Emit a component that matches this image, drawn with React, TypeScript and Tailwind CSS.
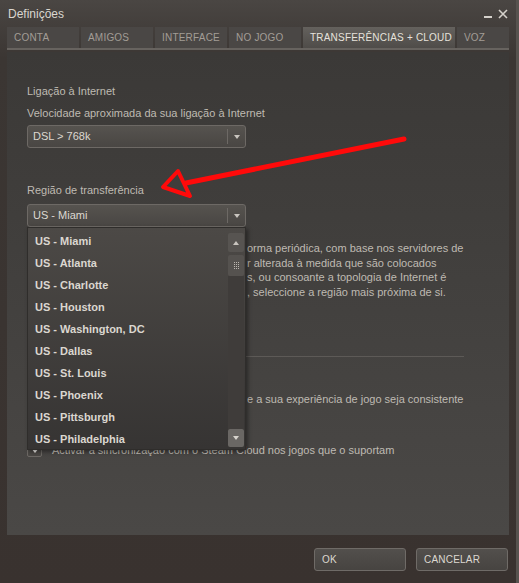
import React from 'react';

const tabs = [
  { label: 'CONTA', w: 'w-[72px]' },
  { label: 'AMIGOS', w: 'w-[72px]' },
  { label: 'INTERFACE', w: 'w-[72px]' },
  { label: 'NO JOGO', w: 'w-[72px]' },
  { label: 'TRANSFERÊNCIAS + CLOUD', w: 'w-[152px]', active: true },
  { label: 'VOZ', w: 'w-[52px]' },
];

const regions = [
  'US - Miami',
  'US - Atlanta',
  'US - Charlotte',
  'US - Houston',
  'US - Washington, DC',
  'US - Dallas',
  'US - St. Louis',
  'US - Phoenix',
  'US - Pittsburgh',
  'US - Philadelphia',
];

// fim das linhas do texto de ajuda; o início fica tapado pela lista aberta
const helpLines = [
  'orma periódica, com base nos servidores de',
  'r alterada à medida que são colocados',
  's, ou consoante a topologia de Internet é',
  ', seleccione a região mais próxima de si.',
];

function ArrowDown({ color = 'border-t-[#c9c5bf]' }: { color?: string }) {
  return (
    <span
      className={`block h-0 w-0 border-x-[3px] border-t-[4px] border-x-transparent ${color}`}
    />
  );
}

function Select({ value }: { value: string }) {
  return (
    <div className="flex h-[23px] w-[219px] items-center rounded-[3px] border border-[#6d6965] bg-gradient-to-b from-[#56534f] to-[#494643] text-[11px] text-[#dcd8d1]">
      <span className="flex-1 pl-[5px]">{value}</span>
      <span className="h-[15px] w-px bg-[#6d6965]" />
      <span className="flex w-[17px] justify-center">
        <ArrowDown />
      </span>
    </div>
  );
}

function RegionList() {
  return (
    <div className="absolute left-0 top-[23px] z-10 flex h-[223px] w-[219px] border border-[#2f2d2b] bg-gradient-to-b from-[#4c4946] to-[#363433] shadow-[2px_2px_4px_rgba(0,0,0,0.4)]">
      <ul className="flex-1 pt-[2px]">
        {regions.map((region) => (
          <li
            key={region}
            className="flex h-[22px] items-center pl-[7px] text-[11px] font-bold text-[#dbd7d0]"
          >
            {region}
          </li>
        ))}
      </ul>
      {/* scrollbar */}
      <div className="mr-px flex w-[16px] flex-col pb-[2px] pt-[5px]">
        <div className="flex h-[19px] items-center justify-center rounded-[2px] bg-[#575451]">
          <span className="block h-0 w-0 border-x-[3px] border-b-[4px] border-x-transparent border-b-[#c9c5bf]" />
        </div>
        <div className="mt-[3px] grid h-[21px] place-items-center rounded-[2px] bg-[#55524f]">
          <div className="grid grid-cols-3 gap-px">
            {Array.from({ length: 12 }).map((_, i) => (
              <span key={i} className="h-px w-px bg-[#bdb8b1]" />
            ))}
          </div>
        </div>
        <div className="flex-1 bg-[#3f3c3a]" />
        <div className="flex h-[18px] items-center justify-center rounded-[2px] bg-[#6a6764]">
          <ArrowDown color="border-t-[#d8d4ce]" />
        </div>
      </div>
    </div>
  );
}

export default function App() {
  return (
    <div className="relative flex h-[583px] w-[519px] overflow-hidden bg-[#2c2a28] font-['Liberation_Sans',Arial,sans-serif]">
      <div className="flex h-full w-[516px] flex-col bg-gradient-to-b from-[#4a4643] via-[#3b3633] via-[10%] to-[#39322f]">
        {/* barra de título */}
        <div className="flex h-[27px] shrink-0 items-center justify-between pl-[8px] pr-[8px]">
          <span className="text-[12px] text-[#dad6cf]">Definições</span>
          <div className="flex items-center gap-[6px] text-[#d5d1cb]">
            <span className="mt-[6px] block h-[2px] w-[8px] bg-[#d5d1cb]" />
            <svg width="10" height="10" viewBox="0 0 10 10">
              <path d="M1 1 L9 9 M9 1 L1 9" stroke="#d5d1cb" strokeWidth="1.6" />
            </svg>
          </div>
        </div>

        {/* separadores */}
        <div className="ml-[7px] flex h-[21px] shrink-0 gap-[2px]">
          {tabs.map((tab) => (
            <div
              key={tab.label}
              className={`flex items-center pl-[7px] text-[10px] tracking-[0.2px] ${tab.w} ${
                tab.active
                  ? 'bg-gradient-to-b from-[#64615d] to-[#4f4c49] text-[#e6e2dc]'
                  : 'bg-[#4a4745] text-[#a29d96]'
              }`}
            >
              {tab.label}
            </div>
          ))}
        </div>
        <div className="mx-[7px] h-[2px] shrink-0 bg-[#67635f]" />

        {/* painel */}
        <div className="mx-[7px] mt-[2px] h-[483px] shrink-0 bg-gradient-to-b from-[#3b3937] to-[#4a4846] pl-[20px] text-[11px] text-[#bfbab2]">
          <p className="mt-[32px] leading-[14px]">Ligação à Internet</p>
          <p className="mt-[8px] leading-[14px]">
            Velocidade aproximada da sua ligação à Internet
          </p>
          <div className="mt-[5px]">
            <Select value="DSL > 768k" />
          </div>

          <p className="mt-[35px] leading-[14px]">Região de transferência</p>
          <div className="relative mt-[7px]">
            <Select value="US - Miami" />
            <RegionList />
          </div>

          <div className="mt-[14px] pl-[220px]">
            {helpLines.map((line) => (
              <p key={line} className="whitespace-nowrap leading-[14.6px]">
                {line}
              </p>
            ))}
          </div>

          <div className="mr-[45px] mt-[57px] h-px bg-[#5d5a57]" />

          <p className="mt-[35px] whitespace-nowrap pl-[220px] leading-[14px]">
            e a sua experiência de jogo seja consistente
          </p>

          <label className="mt-[37px] flex items-center gap-[10px]">
            <span className="flex h-[13px] w-[15px] items-center justify-center rounded-[2px] border border-[#6d6965] bg-[#4a4744]">
              <span className="block h-0 w-0 border-x-[4px] border-t-[5px] border-x-transparent border-t-[#f2f0ec]" />
            </span>
            <span className="leading-[14px]">
              Activar a sincronização com o Steam Cloud nos jogos que o suportam
            </span>
          </label>
        </div>

        {/* botões */}
        <div className="mt-[13px] flex justify-end gap-[10px] pr-[8px]">
          {['OK', 'CANCELAR'].map((label) => (
            <button
              key={label}
              type="button"
              className="flex h-[23px] w-[92px] items-center rounded-[3px] border border-[#6f6b67] bg-gradient-to-b from-[#524f4c] to-[#474441] pl-[7px] text-[10px] tracking-[0.2px] text-[#dcd8d1]"
            >
              {label}
            </button>
          ))}
        </div>
      </div>
      <div className="h-full w-[3px] bg-[#57534f]" />

      {/* seta vermelha por cima do painel */}
      <svg
        className="pointer-events-none absolute left-0 top-0"
        width="519"
        height="583"
        viewBox="0 0 519 583"
      >
        <path
          d="M404 139 L186 183"
          stroke="#ff0a0a"
          strokeWidth="5"
          strokeLinecap="round"
          fill="none"
        />
        <path
          d="M163 187 L178 171 L190 196 Z"
          stroke="#ff0a0a"
          strokeWidth="4"
          strokeLinejoin="round"
          fill="none"
        />
      </svg>
    </div>
  );
}
